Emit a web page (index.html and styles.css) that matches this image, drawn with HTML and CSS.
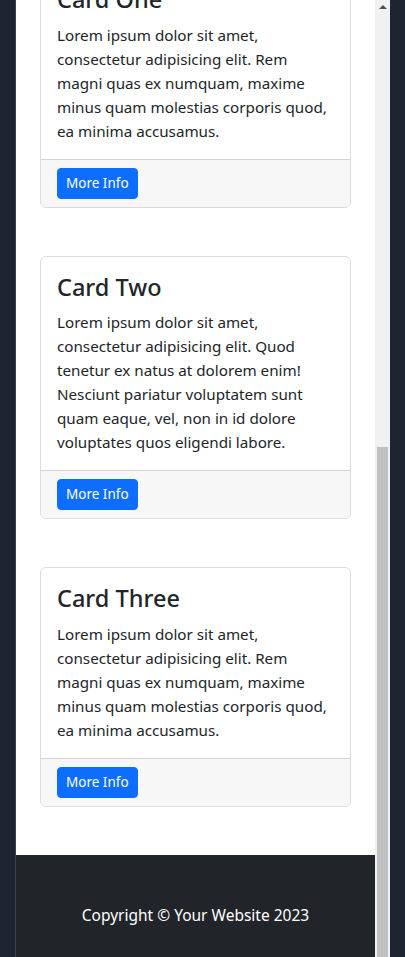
FILE: index.html
```html
<!DOCTYPE html>
<html lang="en">
<head>
<meta charset="utf-8">
<title>Small Business</title>
<link rel="stylesheet" href="styles.css">
</head>
<body>
<div class="frame">
  <div class="viewport" id="viewport">
    <div class="page">
      <nav class="navbar">
        <span class="brand">Start Bootstrap</span>
        <span class="toggler">&#9776;</span>
      </nav>
      <div class="container">
        <section class="hero">
          <div class="hero-img"></div>
          <div class="hero-text">
            <h1 class="hero-title">Business Name or Tagline</h1>
            <p class="hero-lead">This is a template that is great for small businesses. It doesn't have too much fancy flare to it, but it makes a great use of the standard Bootstrap core components. Feel free to use this template for any project you want!</p>
            <a class="btn" href="#!">Call to Action!</a>
          </div>
        </section>
        <div class="cta">
          <p class="cta-text">This call to action card is a great place to showcase some important information or display a clever tagline!</p>
        </div>
        <div class="cards">
          <div class="card">
            <div class="card-body">
              <h2 class="card-title">Card One</h2>
              <p class="card-text">Lorem ipsum dolor sit amet, consectetur adipisicing elit. Rem magni quas ex numquam, maxime minus quam molestias corporis quod, ea minima accusamus.</p>
            </div>
            <div class="card-footer"><a class="btn btn-sm" href="#!">More Info</a></div>
          </div>
          <div class="card">
            <div class="card-body">
              <h2 class="card-title">Card Two</h2>
              <p class="card-text">Lorem ipsum dolor sit amet, consectetur adipisicing elit. Quod tenetur ex natus at dolorem enim! Nesciunt pariatur voluptatem sunt quam eaque, vel, non in id dolore voluptates quos eligendi labore.</p>
            </div>
            <div class="card-footer"><a class="btn btn-sm" href="#!">More Info</a></div>
          </div>
          <div class="card">
            <div class="card-body">
              <h2 class="card-title">Card Three</h2>
              <p class="card-text">Lorem ipsum dolor sit amet, consectetur adipisicing elit. Rem magni quas ex numquam, maxime minus quam molestias corporis quod, ea minima accusamus.</p>
            </div>
            <div class="card-footer"><a class="btn btn-sm" href="#!">More Info</a></div>
          </div>
        </div>
      </div>
      <footer class="footer">
        <p class="copyright">Copyright &copy; Your Website 2023</p>
      </footer>
    </div>
  </div>
  <div class="scrollbar" aria-hidden="true">
    <div class="sb-arrow"></div>
    <div class="sb-thumb"></div>
  </div>
</div>
<script src="script.js"></script>
</body>
</html>
```
FILE: styles.css
```css
html, body {
  margin: 0;
  padding: 0;
  height: 100%;
  overflow: hidden;
  background: #1f2530;
}

.frame {
  display: flex;
  margin-left: 15px;
  width: 374px;
  height: 975px;
  border-left: 1px solid #3d434c;
  background: #ffffff;
}

.viewport {
  width: 359px;
  flex: none;
  height: 100%;
  overflow: hidden;
}

.scrollbar {
  width: 15px;
  flex: none;
  background: #f1f1f1;
  display: flex;
  flex-direction: column;
  align-items: center;
}

.sb-arrow {
  height: 15px;
  width: 15px;
  flex: none;
  display: flex;
  align-items: center;
  justify-content: center;
}

.sb-arrow::before {
  content: "";
  width: 0;
  height: 0;
  border-left: 4px solid transparent;
  border-right: 4px solid transparent;
  border-bottom: 4px solid #505050;
  margin-top: -1px;
}

.sb-thumb {
  margin-top: 432px;
  width: 11px;
  flex: 1;
  background: #c1c1c1;
}

.page {
  font-family: "Noto Sans", "Open Sans", sans-serif;
  font-size: 15.2px;
  line-height: 24px;
  color: #212529;
}

.navbar {
  height: 56px;
  box-sizing: border-box;
  background: #212529;
  display: flex;
  align-items: center;
  justify-content: space-between;
  padding: 0 24px;
  color: #ffffff;
}

.brand { font-size: 20px; }
.toggler { font-size: 20px; color: rgba(255,255,255,.55); }

.container {
  padding: 0 24px;
}

.hero {
  margin: 48px 0;
}

.hero-img {
  height: 138px;
  background: #dee2e6;
  border-radius: 6px;
  margin-bottom: 24px;
}

.hero-text {
  height: 249px;
  overflow: hidden;
}

.hero-title {
  margin: 0 0 8px;
  font-size: 27px;
  font-weight: 300;
  line-height: 1.2;
}

.hero-lead { margin: 0 0 16px; }

.cta {
  height: 178px;
  box-sizing: border-box;
  background: #6c757d;
  color: #ffffff;
  border-radius: 6px;
  padding: 40px 16px;
  text-align: center;
  overflow: hidden;
  margin-bottom: 48px;
}

.cta-text { margin: 0; }

.cards {
  display: flex;
  flex-direction: column;
  gap: 48px;
  margin-bottom: 48px;
}

.card {
  border: 1px solid #dcdcdd;
  border-radius: 6px;
  background: #ffffff;
  overflow: hidden;
}

.card-body {
  padding: 16px;
}

.card-title {
  margin: 0 0 8px;
  font-size: 23.5px;
  font-weight: 500;
  line-height: 29.5px;
}

.card-text {
  margin: 0 0 16px;
}

.card-body .card-text:last-child {
  margin-bottom: 0;
}

.card-footer {
  border-top: 1px solid #d3d4d5;
  background: #f7f7f7;
  padding: 8px 16px;
}

.btn {
  display: inline-block;
  background: #0d6efd;
  color: #ffffff;
  text-decoration: none;
  border: 1px solid #0d6efd;
  border-radius: 6px;
  padding: 6px 12px;
}

.btn-sm {
  font-size: 13.5px;
  line-height: 21px;
  padding: 4px 8px;
  border-radius: 4px;
}

.footer {
  background: #212529;
  padding: 48px 0;
}

.copyright {
  margin: 0;
  text-align: center;
  color: #ffffff;
  font-size: 15.5px;
}
```
FILE: script.js
```js
var viewport = document.getElementById('viewport');
viewport.scrollTop = viewport.scrollHeight;
```
